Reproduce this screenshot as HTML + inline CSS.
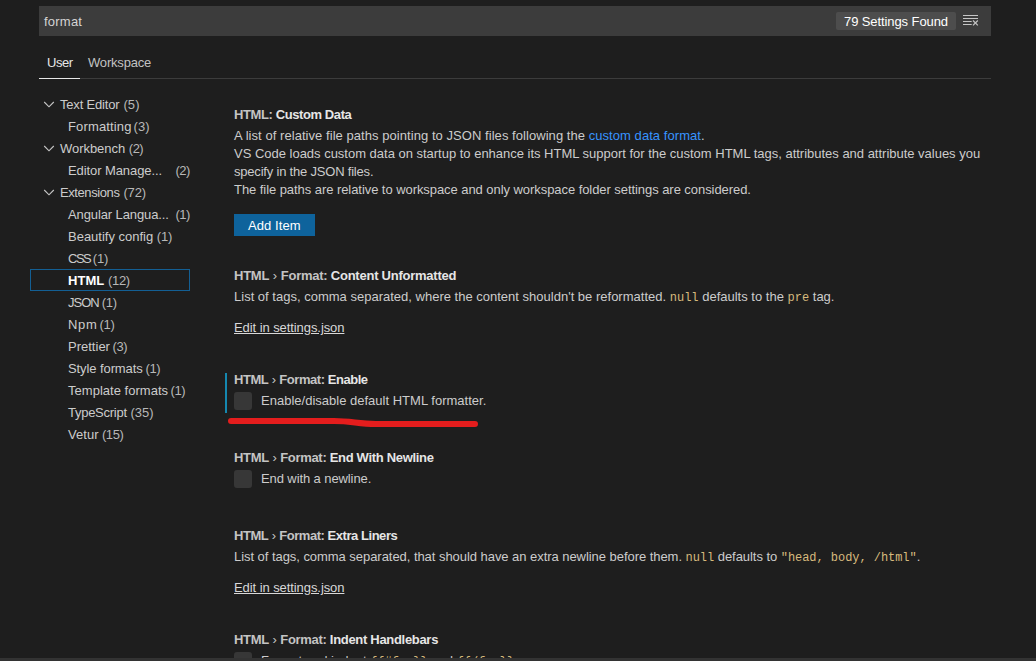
<!DOCTYPE html>
<html><head><meta charset="utf-8">
<style>
html,body{margin:0;padding:0;}
body{width:1036px;height:661px;overflow:hidden;background:#1e1e1e;position:relative;font-family:"Liberation Sans",sans-serif;font-size:13px;color:#cccccc;}
.a{position:absolute;white-space:nowrap;line-height:16px;}
.s{color:#d4d4d4;}
.w{color:#ffffff;}
.tabA{color:#e7e7e7;}
.tabI{color:#c2c2c2;}
.tr{color:#cccccc;}
.cnt{color:#b8b8b8;}
.t{font-weight:bold;color:#c4c4c4;}
.t b{color:#e6e6e6;}
.chv{font-weight:normal;margin:0 0.5px;}
.d{color:#cccccc;}
.lnk{color:#3794ff;}
.code{font-family:"Liberation Mono",monospace;color:#d7ba7d;font-size:12px;}
.ed{color:#d8d8d8;text-decoration:underline;}
.cb{position:absolute;left:234px;width:18px;height:18px;background:#373737;border-radius:3px;}
.r{position:absolute;}
</style></head><body>
<div class="r" style="left:39px;top:6px;width:952px;height:30px;background:#3c3c3c;"></div>
<div class="r" style="left:836px;top:12px;width:120px;height:18px;background:#4d4d4d;border-radius:2px;"></div>
<svg class="r" style="left:962px;top:13px" width="18" height="14" viewBox="0 0 18 14">
<g stroke="#c5c5c5" stroke-width="1" fill="none">
<line x1="1" y1="2.5" x2="16" y2="2.5"/><line x1="1" y1="5.5" x2="16" y2="5.5"/><line x1="1" y1="8.5" x2="9.7" y2="8.5"/><line x1="1" y1="11.5" x2="9.7" y2="11.5"/>
<line x1="11" y1="7.5" x2="15.8" y2="12.3" stroke-width="1.2"/><line x1="15.8" y1="7.5" x2="11" y2="12.3" stroke-width="1.2"/>
</g></svg>
<div class="r" style="left:39px;top:78px;width:41px;height:1px;background:#e7e7e7;"></div>
<div class="r" style="left:80px;top:78px;width:911px;height:1px;background:#3c3c3c;"></div>
<svg class="r" style="left:43px;top:100px" width="12" height="8" viewBox="0 0 12 8"><path d="M1.2 2 L6 6.8 L10.8 2" stroke="#c5c5c5" stroke-width="1.15" fill="none"/></svg>
<svg class="r" style="left:43px;top:144px" width="12" height="8" viewBox="0 0 12 8"><path d="M1.2 2 L6 6.8 L10.8 2" stroke="#c5c5c5" stroke-width="1.15" fill="none"/></svg>
<svg class="r" style="left:43px;top:188px" width="12" height="8" viewBox="0 0 12 8"><path d="M1.2 2 L6 6.8 L10.8 2" stroke="#c5c5c5" stroke-width="1.15" fill="none"/></svg>
<div class="r" style="left:30px;top:269px;width:158px;height:20px;border:1px solid #135f94;"></div>
<div class="r" style="left:234px;top:214px;width:81px;height:22px;background:#0e639c;"></div>
<div class="r" style="left:225px;top:373px;width:2px;height:40px;background:#1588b0;"></div>
<div class="cb" style="top:392px"></div>
<div class="cb" style="top:470px"></div>
<div class="cb" style="top:652px"></div>
<svg class="r" style="left:220px;top:410px" width="270" height="20" viewBox="220 410 270 20"><path d="M231 421 L334 421 C352 421 358 424 376 424 L475 424" stroke="#e41d1d" stroke-width="6" fill="none" stroke-linecap="round"/></svg>
<div id="search" class="a s" style="left:44px;top:14px;letter-spacing:0.220px;">format</div>
<div id="badge" class="a w" style="left:844px;top:14px;letter-spacing:-0.094px;">79 Settings Found</div>
<div id="user" class="a tabA" style="left:47px;top:55px;letter-spacing:-0.435px;">User</div>
<div id="ws" class="a tabI" style="left:88px;top:55px;letter-spacing:-0.190px;">Workspace</div>
<div id="te" class="a tr" style="left:60px;top:97px;letter-spacing:-0.179px;">Text Editor</div>
<div id="te_c" class="a tr cnt" style="left:123.4px;top:97px;letter-spacing:0.100px;">(5)</div>
<div id="fm" class="a tr" style="left:68px;top:119px;letter-spacing:0.149px;">Formatting</div>
<div id="fm_c" class="a tr cnt" style="left:133.6px;top:119px;">(3)</div>
<div id="wb" class="a tr" style="left:60px;top:141px;letter-spacing:-0.050px;">Workbench</div>
<div id="wb_c" class="a tr cnt" style="left:128.8px;top:141px;letter-spacing:-0.500px;">(2)</div>
<div id="em" class="a tr" style="left:68px;top:163px;letter-spacing:-0.087px;">Editor Manage...</div>
<div id="em_c" class="a tr cnt" style="left:175.4px;top:163px;letter-spacing:-0.500px;">(2)</div>
<div id="ex" class="a tr" style="left:60px;top:185px;letter-spacing:-0.411px;">Extensions</div>
<div id="ex_c" class="a tr cnt" style="left:123.4px;top:185px;letter-spacing:-0.134px;">(72)</div>
<div id="an" class="a tr" style="left:68px;top:207px;letter-spacing:-0.107px;">Angular Langua...</div>
<div id="an_c" class="a tr cnt" style="left:175.4px;top:207px;letter-spacing:-0.500px;">(1)</div>
<div id="bc" class="a tr" style="left:68px;top:229px;letter-spacing:-0.012px;">Beautify config</div>
<div id="bc_c" class="a tr cnt" style="left:156.8px;top:229px;letter-spacing:-0.200px;">(1)</div>
<div id="css" class="a tr" style="left:68px;top:251px;letter-spacing:-1.483px;">CSS</div>
<div id="css_c" class="a tr cnt" style="left:92.8px;top:251px;letter-spacing:-0.200px;">(1)</div>
<div id="html" class="a tr" style="left:68px;top:273px;letter-spacing:0.033px;"><b style="color:#ffffff">HTML</b></div>
<div id="html_c" class="a tr cnt" style="left:108.0px;top:273px;letter-spacing:-0.333px;">(12)</div>
<div id="json" class="a tr" style="left:68px;top:295px;letter-spacing:-0.987px;">JSON</div>
<div id="json_c" class="a tr cnt" style="left:101.8px;top:295px;letter-spacing:-0.300px;">(1)</div>
<div id="npm" class="a tr" style="left:68px;top:317px;letter-spacing:0.717px;">Npm</div>
<div id="npm_c" class="a tr cnt" style="left:99.6px;top:317px;letter-spacing:-0.300px;">(1)</div>
<div id="pr" class="a tr" style="left:68px;top:339px;letter-spacing:0.007px;">Prettier</div>
<div id="pr_c" class="a tr cnt" style="left:112.6px;top:339px;letter-spacing:-0.500px;">(3)</div>
<div id="sf" class="a tr" style="left:68px;top:361px;letter-spacing:-0.090px;">Style formats</div>
<div id="sf_c" class="a tr cnt" style="left:145.6px;top:361px;letter-spacing:-0.500px;">(1)</div>
<div id="tf" class="a tr" style="left:68px;top:383px;letter-spacing:0.028px;">Template formats</div>
<div id="tf_c" class="a tr cnt" style="left:170.6px;top:383px;letter-spacing:-0.500px;">(1)</div>
<div id="ts" class="a tr" style="left:68px;top:405px;letter-spacing:-0.265px;">TypeScript</div>
<div id="ts_c" class="a tr cnt" style="left:130.4px;top:405px;">(35)</div>
<div id="vt" class="a tr" style="left:68px;top:427px;letter-spacing:0.027px;">Vetur</div>
<div id="vt_c" class="a tr cnt" style="left:102.0px;top:427px;letter-spacing:-0.467px;">(15)</div>
<div id="t1" class="a t" style="left:234px;top:107px;letter-spacing:-0.398px;">HTML: <b>Custom Data</b></div>
<div id="d1a" class="a d" style="left:234px;top:128px;letter-spacing:0.053px;">A list of relative file paths pointing to JSON files following the <span class="lnk">custom data format</span>.</div>
<div id="d1b" class="a d" style="left:234px;top:146px;letter-spacing:-0.012px;">VS Code loads custom data on startup to enhance its HTML support for the custom HTML tags, attributes and attribute values you</div>
<div id="d1c" class="a d" style="left:234px;top:164px;letter-spacing:-0.200px;">specify in the JSON files.</div>
<div id="d1d" class="a d" style="left:234px;top:182px;letter-spacing:-0.061px;">The file paths are relative to workspace and only workspace folder settings are considered.</div>
<div id="btn" class="a w" style="left:248px;top:218px;letter-spacing:0.071px;">Add Item</div>
<div id="t2" class="a t" style="left:234px;top:268px;letter-spacing:-0.242px;">HTML <span class="chv">›</span> Format: <b>Content Unformatted</b></div>
<div id="d2" class="a d" style="left:234px;top:289px;letter-spacing:0.005px;">List of tags, comma separated, where the content shouldn't be reformatted. <span class="code">null</span> defaults to the <span class="code">pre</span> tag.</div>
<div id="e2" class="a ed" style="left:234px;top:320px;letter-spacing:-0.075px;">Edit in settings.json</div>
<div id="t3" class="a t" style="left:234px;top:372px;letter-spacing:-0.450px;">HTML <span class="chv">›</span> Format: <b>Enable</b></div>
<div id="d3" class="a d" style="left:261px;top:393px;letter-spacing:0.008px;">Enable/disable default HTML formatter.</div>
<div id="t4" class="a t" style="left:234px;top:450px;letter-spacing:-0.316px;">HTML <span class="chv">›</span> Format: <b>End With Newline</b></div>
<div id="d4" class="a d" style="left:261px;top:471px;letter-spacing:-0.097px;">End with a newline.</div>
<div id="t5" class="a t" style="left:234px;top:528px;letter-spacing:-0.456px;">HTML <span class="chv">›</span> Format: <b>Extra Liners</b></div>
<div id="d5" class="a d" style="left:234px;top:549px;letter-spacing:-0.048px;">List of tags, comma separated, that should have an extra newline before them. <span class="code">null</span> defaults to <span class="code">"head, body, /html"</span>.</div>
<div id="e5" class="a ed" style="left:234px;top:580px;letter-spacing:-0.075px;">Edit in settings.json</div>
<div id="t6" class="a t" style="left:234px;top:632px;letter-spacing:-0.306px;">HTML <span class="chv">›</span> Format: <b>Indent Handlebars</b></div>
<div id="d6" class="a d" style="left:261px;top:653px;">Format and indent <span class="code">{{#foo}}</span> and <span class="code">{{/foo}}</span>.</div>
<div class="r" style="left:0;top:658px;width:1036px;height:3px;background:#333333;"></div>
</body></html>
